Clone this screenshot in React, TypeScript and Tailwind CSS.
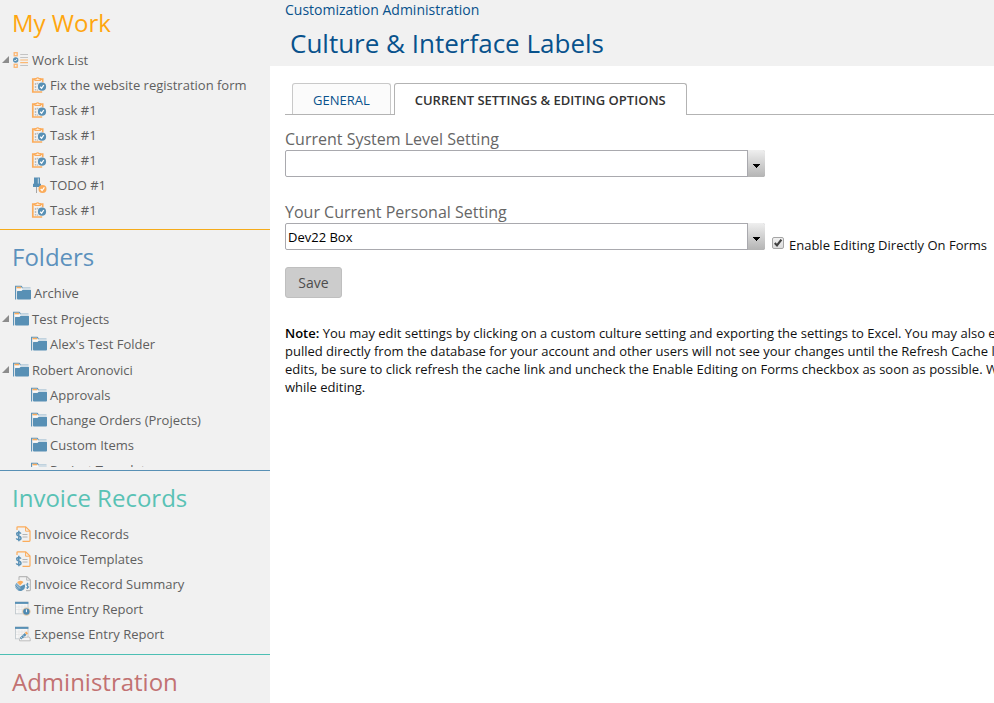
import React, { ReactNode } from 'react'

type IconName =
    | 'worklist'
    | 'task'
    | 'todo'
    | 'folder'
    | 'invoice'
    | 'summary'
    | 'time'
    | 'expense'

type TreeItem = {
    label: string
    icon: IconName
    level: 'leaf' | 'parent' | 'child'
}

const workItems: TreeItem[] = [
    { label: 'Work List', icon: 'worklist', level: 'parent' },
    { label: 'Fix the website registration form', icon: 'task', level: 'child' },
    { label: 'Task #1', icon: 'task', level: 'child' },
    { label: 'Task #1', icon: 'task', level: 'child' },
    { label: 'Task #1', icon: 'task', level: 'child' },
    { label: 'TODO #1', icon: 'todo', level: 'child' },
    { label: 'Task #1', icon: 'task', level: 'child' },
]

const folderItems: TreeItem[] = [
    { label: 'Archive', icon: 'folder', level: 'leaf' },
    { label: 'Test Projects', icon: 'folder', level: 'parent' },
    { label: "Alex's Test Folder", icon: 'folder', level: 'child' },
    { label: 'Robert Aronovici', icon: 'folder', level: 'parent' },
    { label: 'Approvals', icon: 'folder', level: 'child' },
    { label: 'Change Orders (Projects)', icon: 'folder', level: 'child' },
    { label: 'Custom Items', icon: 'folder', level: 'child' },
    { label: 'Project Templates', icon: 'folder', level: 'child' },
]

const invoiceItems: TreeItem[] = [
    { label: 'Invoice Records', icon: 'invoice', level: 'leaf' },
    { label: 'Invoice Templates', icon: 'invoice', level: 'leaf' },
    { label: 'Invoice Record Summary', icon: 'summary', level: 'leaf' },
    { label: 'Time Entry Report', icon: 'time', level: 'leaf' },
    { label: 'Expense Entry Report', icon: 'expense', level: 'leaf' },
]

const shapes: Record<IconName, ReactNode> = {
    worklist: (
        <>
            <rect x="1.2" y="0.7" width="3" height="3" fill="none" stroke="#fbb673" strokeWidth="1.3" />
            <rect x="1.2" y="12.3" width="3" height="3" fill="none" stroke="#fbb673" strokeWidth="1.3" />
            <circle cx="2.7" cy="8" r="2.7" fill="#5890b5" />
            <path d="M1.4 8l1 1 1.6-2" fill="none" stroke="#fff" strokeWidth="0.9" />
            <path d="M7.2 2.5h7.8M7.2 5.5h7.8M7.2 13.5h7.8" stroke="#c3c3c3" strokeWidth="1.1" />
            <path d="M7.2 8h7.8M7.2 10.7h7.8" stroke="#fbb873" strokeWidth="1.2" />
        </>
    ),
    task: (
        <>
            <path d="M4 2.2H1.8V15h9.4M9 2.2h2.7v3" fill="none" stroke="#fbac5b" strokeWidth="1.7" />
            <path d="M4 3.4V1.6h1.5a1.3 1.3 0 0 1 2.4 0H9.4v1.8z" fill="#fff" stroke="#fbac5b" strokeWidth="1.2" />
            <path d="M4.5 6v7.5M6.5 5.8v1.4M6.5 12.5v1.2" stroke="#bcbcbc" strokeWidth="1.4" strokeDasharray="2 1" />
            <circle cx="11" cy="9.7" r="4.1" fill="#5890b5" />
            <path d="M9.2 9.8l1.4 1.5 2.2-3.3" fill="none" stroke="#fff" strokeWidth="1.3" />
        </>
    ),
    todo: (
        <>
            <path d="M5.5 10v6" stroke="#a5a5a5" strokeWidth="1" />
            <path d="M3 0.4h6v6.4h1V10H2V6.8h1z" fill="#5890b5" />
            <path d="M7.3 1.4v5.2" stroke="#d9e5ed" strokeWidth="0.9" />
            <circle cx="11.5" cy="12" r="4" fill="#fbac5b" />
            <path d="M9.7 12l1.4 1.5 2.3-3.2" fill="none" stroke="#fff" strokeWidth="1.2" />
        </>
    ),
    folder: (
        <>
            <path d="M0.6 14.5V1.2h5.6l1.3 1.6" fill="none" stroke="#5890b5" strokeWidth="1.1" />
            <path d="M1.5 1.8h4.6v1.6H1.5z" fill="#fbac5b" />
            <path d="M7 3h8.5" stroke="#8fb2ca" strokeWidth="1" />
            <path d="M1.5 4.2h14" stroke="#fff" strokeWidth="0.8" />
            <path d="M2 6.6Q2 6 2.6 6h3.9l1.2-1.2h7.7q.6 0 .6.6v8.2q0 .9-.9.9H2.9Q2 14.5 2 13.6z" fill="#5890b5" />
        </>
    ),
    invoice: (
        <>
            <path d="M2 4V1.5q0-.7.7-.7h8L15 5v9.5q0 .8-.8.8H7.5" fill="none" stroke="#fbac5b" strokeWidth="1.2" />
            <path d="M10.6 1v4.2H15" fill="none" stroke="#fbac5b" strokeWidth="1" />
            <path d="M7.5 8.5h5M7.5 11h5" stroke="#b5b5b5" strokeWidth="1" />
            <path d="M5.9 7.6Q5.4 6.4 3.8 6.4 1.7 6.4 1.7 8T3.8 9.9 6 12 3.8 13.7 1.4 12.3M3.8 4.8v10.4" fill="none" stroke="#5890b5" strokeWidth="1.5" />
        </>
    ),
    summary: (
        <>
            <path d="M4 4V1.4q0-.8.8-.8h7L15.4 4v9.8q0 .8-.8.8H11" fill="none" stroke="#b8b8b8" strokeWidth="1.1" />
            <path d="M11.6 .8V4.2h3.6" fill="none" stroke="#b8b8b8" strokeWidth="0.9" />
            <path d="M13.8 8.4q-.4-.8-1.3-.8t-1.2.9 1.2 1.3 1.3 1.2-1.3 1.2-1.3-.8M12.5 6.8v6.2" fill="none" stroke="#5890b5" strokeWidth="0.9" />
            <path d="M5.2 10.5L1.6 6.8A4.8 4.8 0 1 0 9.6 8.2z" fill="#5890b5" />
            <path d="M5.2 9.4L2 6.2A4.6 4.6 0 0 1 8.4 6z" fill="#fbac5b" />
            <path d="M.5 8l4 5M.2 10l3 4M1.4 7.4l4 5" stroke="#cfdde7" strokeWidth="0.6" />
        </>
    ),
    time: (
        <>
            <rect x="0.5" y="1" width="12.5" height="11.8" fill="#f6f6f6" stroke="#c2c9ce" strokeWidth="0.9" />
            <path d="M1 6h12M1 8.5h12M4 4v8.5M7 4v8.5M10 4v8.5" stroke="#e3e3e3" strokeWidth="0.6" />
            <path d="M0 0.9h13.4v2H0z" fill="#5890b5" />
            <circle cx="11.4" cy="10.6" r="4.2" fill="#e3c9aa" />
            <circle cx="11.4" cy="10.6" r="3.2" fill="#4d89b2" />
            <path d="M11.4 8.4v2.8" stroke="#fff" strokeWidth="1" />
        </>
    ),
    expense: (
        <>
            <rect x="0.5" y="1" width="12.5" height="11.8" fill="#f6f6f6" stroke="#c2c9ce" strokeWidth="0.9" />
            <path d="M1 6h12M1 8.5h12M4 4v8.5M7 4v8.5M10 4v8.5" stroke="#e3e3e3" strokeWidth="0.6" />
            <path d="M0 0.9h13.4v2H0z" fill="#5890b5" />
            <path d="M4.5 14.8q-.9-2 1.5-2.6 7-1.6 8.4-1 .9.4.9 3.6z" fill="#f4f4f4" stroke="#b9b9b9" strokeWidth="0.9" />
            <path d="M5.6 12.6l5-4.6" stroke="#5890b5" strokeWidth="2.4" />
            <path d="M10.8 7.8l1.4-1.3" stroke="#fbac5b" strokeWidth="2.6" />
            <path d="M6 11l1.6 1.8M8 9.4l1.6 1.8" stroke="#fff" strokeWidth="0.6" />
        </>
    ),
}

const Icon = ({ name }: { name: IconName }) => (
    <svg viewBox="0 0 16 16" className="h-4 w-4 shrink-0" aria-hidden="true">
        {shapes[name]}
    </svg>
)

const levelClasses = {
    leaf: 'pl-[15px]',
    parent: 'mt-px pl-[2px]',
    child: 'pl-[31px]',
}

const Tree = ({ items }: { items: TreeItem[] }) => (
    <ul className="flow-root">
        {items.map((item, i) => (
            <li key={i} className={`flex h-[25px] items-center ${levelClasses[item.level]}`}>
                {item.level === 'parent' && (
                    <svg viewBox="0 0 7 7" className="mr-1 h-[7px] w-[7px] shrink-0" aria-hidden="true">
                        <path d="M7 0v7H0z" fill="#8c8c8c" />
                    </svg>
                )}
                <a
                    href="#"
                    className="flex items-center gap-[3px] text-[13px] leading-[18px] whitespace-nowrap text-[#5f5f5f]"
                >
                    <Icon name={item.icon} />
                    {item.label}
                </a>
            </li>
        ))}
    </ul>
)

const SectionTitle = ({ color, children }: { color: string; children: ReactNode }) => (
    <h2 className={`mb-[5px] pl-3 text-2xl leading-9 ${color}`}>{children}</h2>
)

const ComboBox = ({ id, label, options }: { id: string; label: string; options: string[] }) => (
    <div className="w-[480px]">
        <label htmlFor={id} className="block text-base leading-[22px] text-[#666]">
            {label}
        </label>
        <div className="relative">
            <select
                id={id}
                className="block h-[27px] w-full appearance-none rounded-[2px] border border-[#a9a9ae] bg-white pt-[2px] pr-5 pl-[2px] text-[13px] text-black"
            >
                {options.map((o) => (
                    <option key={o}>{o}</option>
                ))}
            </select>
            <span className="pointer-events-none absolute inset-y-0 right-0 flex w-[18px] items-center justify-center rounded-r-[2px] border-l border-[#a9a9ae] bg-linear-to-b from-[#efefef] to-[#b4b4b4]">
                <svg viewBox="0 0 7 4" className="mt-1 h-1 w-[7px]" aria-hidden="true">
                    <path d="M0 0h7v1H6v1H5v1H4v1H3V3H2V2H1V1H0z" fill="#000" />
                </svg>
            </span>
        </div>
    </div>
)

const Sidebar = () => (
    <nav className="w-[270px] shrink-0 bg-[#f1f1f1]">
        <section className="border-b border-[#f5ab1a] pt-[5px] pb-[7px]">
            <SectionTitle color="text-[#ffa60f]">My Work</SectionTitle>
            <Tree items={workItems} />
        </section>
        <section className="border-b border-[#5890b5] pt-[9px] pb-[3px]">
            <SectionTitle color="text-[#5c91bd]">Folders</SectionTitle>
            <div className="h-[187px] overflow-hidden">
                <Tree items={folderItems} />
            </div>
        </section>
        <section className="border-b border-[#4cbfb4] pt-[9px] pb-2">
            <SectionTitle color="text-[#59c2b5]">Invoice Records</SectionTitle>
            <Tree items={invoiceItems} />
        </section>
        <section className="pt-[9px]">
            <SectionTitle color="text-[#c27272]">Administration</SectionTitle>
        </section>
    </nav>
)

export default function App() {
    return (
        <div className="flex min-h-screen bg-white font-['Open_Sans',sans-serif]">
            <Sidebar />
            <main className="min-w-0 flex-1 overflow-hidden">
                <header className="h-[66px] bg-[#f1f1f1] pl-[15px] text-[#08528c]">
                    <a href="#" className="block text-sm leading-5">
                        Customization Administration
                    </a>
                    <h1 className="pt-1 pl-[5px] text-[26px] leading-[38px]">Culture &amp; Interface Labels</h1>
                </header>

                <div className="pt-[17px] pl-[15px]">
                    <div role="tablist" className="flex h-8 gap-[3px] border-b border-[#b3b3b3] pl-[7px]">
                        <button
                            type="button"
                            role="tab"
                            aria-selected="false"
                            className="h-[31px] rounded-t-[3px] border border-b-0 border-[#c9c9c9] bg-[#fbfbfb] px-5 pt-1 text-[13px] text-[#08528c]"
                        >
                            GENERAL
                        </button>
                        <button
                            type="button"
                            role="tab"
                            aria-selected="true"
                            className="h-8 rounded-t-[3px] border border-b-0 border-[#b3b3b3] bg-white px-5 pt-[2px] text-[13px] font-semibold text-[#333]"
                        >
                            CURRENT SETTINGS &amp; EDITING OPTIONS
                        </button>
                    </div>

                    <form className="pt-[13px]">
                        <ComboBox id="system" label="Current System Level Setting" options={['']} />
                        <div className="flex items-end gap-[7px] pt-6">
                            <ComboBox id="personal" label="Your Current Personal Setting" options={['Dev22 Box']} />
                            <label className="-mb-1 flex items-start gap-[5px] text-[13px] leading-[18px] whitespace-nowrap text-[#111]">
                                <span className="relative mt-px flex h-3 w-3">
                                    <input
                                        type="checkbox"
                                        defaultChecked
                                        className="peer h-3 w-3 appearance-none rounded-[2px] border border-[#a5a5a5] bg-linear-to-b from-[#f0f0f0] to-[#dcdcdc]"
                                    />
                                    <svg
                                        viewBox="0 0 12 12"
                                        className="pointer-events-none invisible absolute inset-0 h-3 w-3 peer-checked:visible"
                                        aria-hidden="true"
                                    >
                                        <path d="M2.8 6l2.2 2.4L9.4 2.6" fill="none" stroke="#404040" strokeWidth="2.2" />
                                    </svg>
                                </span>
                                Enable Editing Directly On Forms
                            </label>
                        </div>
                        <button
                            type="button"
                            className="mt-[17px] block h-[31px] min-w-[57px] rounded-[3px] border border-[#bfbfbf] bg-[#cccccc] px-3 text-sm text-[#4d4d4d]"
                        >
                            Save
                        </button>
                    </form>

                    <p className="pt-[26px] text-[13px] leading-[18px] whitespace-nowrap text-[#111]">
                        <strong className="font-semibold text-black">Note:</strong> You may edit settings by clicking on a custom
                        culture setting and exporting the settings to Excel. You may also edit
                        <br />
                        pulled directly from the database for your account and other users will not see your changes until the
                        Refresh Cache link
                        <br />
                        edits, be sure to click refresh the cache link and uncheck the Enable Editing on Forms checkbox as soon as
                        possible. We
                        <br />
                        while editing.
                    </p>
                </div>
            </main>
        </div>
    )
}
